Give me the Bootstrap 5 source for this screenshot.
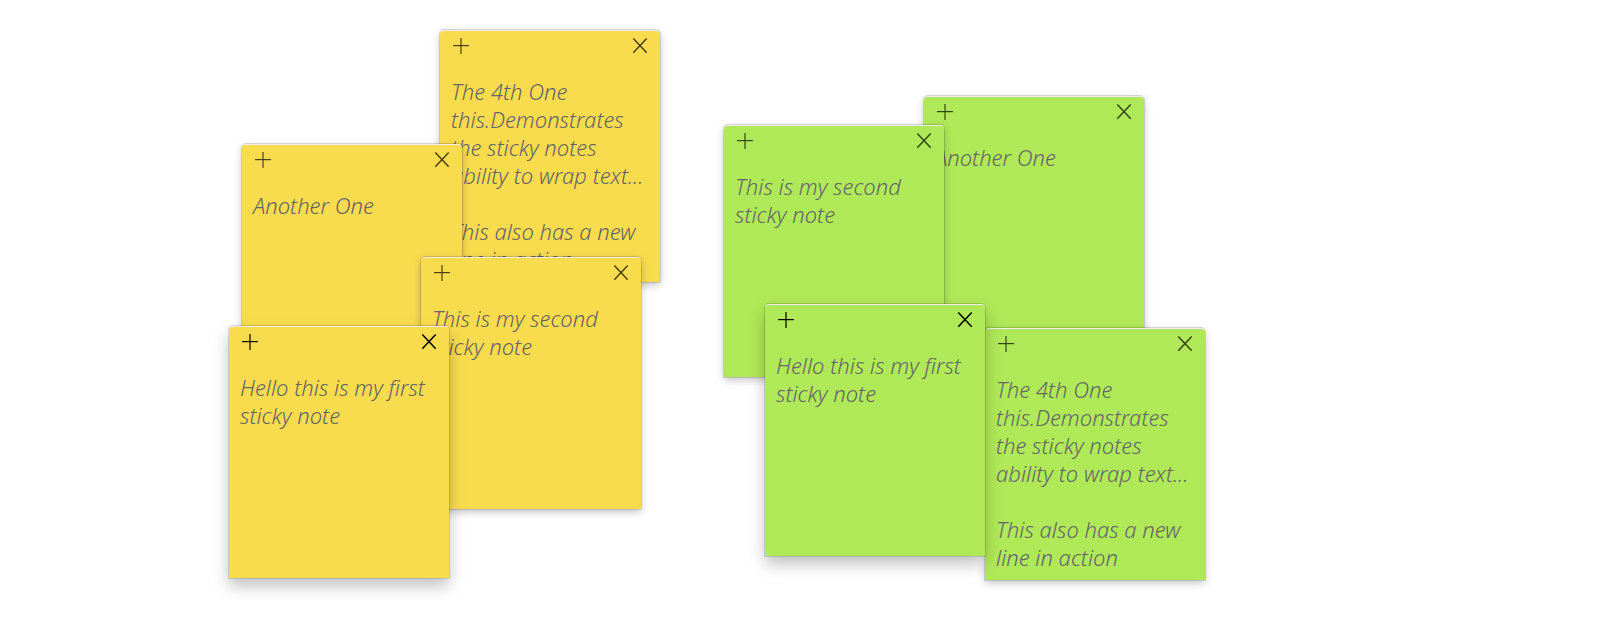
<!DOCTYPE html>
<html lang="en">
<head>
<meta charset="utf-8">
<meta name="viewport" content="width=device-width, initial-scale=1">
<title>Sticky notes</title>
<link href="https://cdn.jsdelivr.net/npm/bootstrap@5.3.0/dist/css/bootstrap.min.css" rel="stylesheet">
<style>
  .board { flex: 0 0 500px; min-height: 600px; }
  .board:first-child { margin-left: 220px; }
  .sticky {
    width: 220px;
    height: 252px;
    background: var(--paper);
    border-top: 1px solid #eee;
    border-radius: 4px 4px 0 0;
    box-shadow: 0 0 0 1px rgba(0, 0, 0, .13), 0 3px 8px rgba(0, 0, 0, .24);
  }
  .sticky.active { box-shadow: 0 0 0 1px rgba(0, 0, 0, .13), 0 8px 16px rgba(0, 0, 0, .25); }
  .yellow { --paper: #f9dc4e; }
  .green { --paper: #b0e957; }
  .tools { height: 46px; padding: 6px 11px 0 12px; }
  .tool { width: 18px; height: 18px; color: #000; opacity: .7; line-height: 0; }
  .active .tool { opacity: 1; }
  .note-text {
    height: 205px;
    padding: 0 11px;
    resize: none;
    outline: 0;
    color: #646469;
    font: italic 300 22px/28px "Noto Sans", "Open Sans", sans-serif;
  }
</style>
</head>
<body class="bg-white overflow-hidden">
<main class="d-flex">
  <section class="board yellow position-relative" aria-label="Yellow notes" data-notes="fourth:220,30 another:22,144 second:201,257 first:9,326"></section>
  <section class="board green position-relative" aria-label="Green notes" data-notes="another:204,96 second:4,125 fourth:265,328 first:45,304"></section>
</main>

<template id="sticky-template">
  <article class="sticky position-absolute">
    <div class="tools d-flex justify-content-between">
      <button type="button" class="tool border-0 bg-transparent p-0" aria-label="Add note">
        <svg width="18" height="18" shape-rendering="crispEdges" aria-hidden="true"><path d="M8 1h2v16H8z" fill-opacity=".6"/><path d="M1 8h16v1H1z"/><path d="M1 9h16v1H1z" fill-opacity=".2"/></svg>
      </button>
      <button type="button" class="tool border-0 bg-transparent p-0" aria-label="Remove note">
        <svg width="18" height="18" aria-hidden="true"><path d="M2.3 1.5L15.7 15.8M15.7 1.5L2.3 15.8" stroke="currentColor" stroke-width="1.5"/></svg>
      </button>
    </div>
    <textarea class="note-text d-block w-100 border-0 bg-transparent overflow-hidden" aria-label="Note text" spellcheck="false"></textarea>
  </article>
</template>

<script src="https://cdn.jsdelivr.net/npm/bootstrap@5.3.0/dist/js/bootstrap.bundle.min.js"></script>
<script>
  const texts = {
    first: "Hello this is my first sticky note",
    second: "This is my second sticky note",
    another: "Another One",
    fourth: "The 4th One\nthis.Demonstrates the sticky notes ability to wrap text...\n\nThis also has a new line in action"
  };
  const template = document.getElementById("sticky-template");
  for (const board of document.querySelectorAll(".board")) {
    for (const item of board.dataset.notes.split(" ")) {
      const [name, place] = item.split(":");
      const [left, top] = place.split(",");
      const note = template.content.cloneNode(true).firstElementChild;
      note.style.left = left + "px";
      note.style.top = top + "px";
      note.classList.toggle("active", name === "first");
      note.querySelector("textarea").value = texts[name];
      board.append(note);
    }
  }
</script>
</body>
</html>
